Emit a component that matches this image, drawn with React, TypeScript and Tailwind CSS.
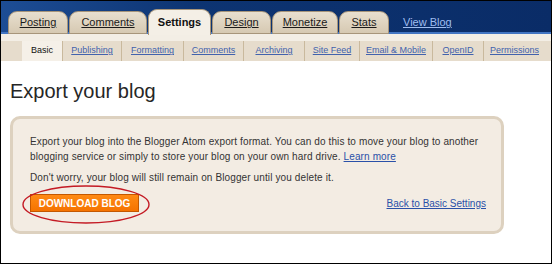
import React from 'react';

const tabs = [
  { label: 'Posting', w: 'w-[60px]' },
  { label: 'Comments', w: 'w-[78px]' },
  { label: 'Settings', w: 'w-[63px]', active: true },
  { label: 'Design', w: 'w-[59px]' },
  { label: 'Monetize', w: 'w-[66px]' },
  { label: 'Stats', w: 'w-[50px]' },
];

const subTabs = [
  { label: 'Basic', w: 'w-[40px]', active: true },
  { label: 'Publishing', w: 'w-[59px]' },
  { label: 'Formatting', w: 'w-[62px]' },
  { label: 'Comments', w: 'w-[60px]' },
  { label: 'Archiving', w: 'w-[61px]' },
  { label: 'Site Feed', w: 'w-[55px]' },
  { label: 'Email & Mobile', w: 'w-[73px]' },
  { label: 'OpenID', w: 'w-[51px]' },
  { label: 'Permissions', w: 'w-[62px]' },
];

function App() {
  return (
    <div className="relative w-[552px] h-[264px] overflow-hidden border border-black bg-white font-['Liberation_Sans',Arial,sans-serif] text-[#333]">
      {/* top navigation */}
      <div className="relative h-[33px] bg-[linear-gradient(to_right,#1d4d95,#0d3472_35%,#0a2c67)]">
        <div className="absolute left-0 right-0 bottom-0 h-[2px] bg-[#4275c2]" />
        <div className="relative flex items-end h-full pl-[7px] gap-[1px]">
          {tabs.map((t) =>
            t.active ? (
              <div
                key={t.label}
                className={`${t.w} h-[26px] -mb-px rounded-t-[9px] border border-b-0 border-[#a7957a] bg-[#f4efe6] flex items-center justify-center text-[11px] font-bold text-[#111]`}
              >
                {t.label}
              </div>
            ) : (
              <div
                key={t.label}
                className={`${t.w} h-[23px] rounded-t-[9px] border border-[#a7957a] bg-[linear-gradient(to_bottom,#e8dfcf,#d6c9b2)] flex items-center justify-center text-[11px] text-[#1a1a1a] underline`}
              >
                {t.label}
              </div>
            )
          )}
          <div className="ml-[13px] h-[23px] flex items-center text-[11px] text-[#9fbdf0] underline">View Blog</div>
        </div>
      </div>

      {/* sub navigation */}
      <div className="bg-[#f3eee5] pt-[7px]">
        <div className="flex h-[20px] bg-[#e6dccc]">
          <div className="w-[21px]" />
          {subTabs.map((s) =>
            s.active ? (
              <div key={s.label} className={`${s.w} bg-[#f5f0e8] flex items-center justify-center text-[9px] text-[#111]`}>
                {s.label}
              </div>
            ) : (
              <div
                key={s.label}
                className={`${s.w} border-l border-[#c9b99d] flex items-center justify-center text-[9px] text-[#4262ad] underline`}
              >
                {s.label}
              </div>
            )
          )}
        </div>
      </div>

      {/* content */}
      <div className="px-[9px]">
        <h1 className="mt-[18px] text-[20px] leading-[24px] font-medium text-[#262626]">Export your blog</h1>

        <div className="relative mt-[13px] w-[494px] h-[118px] rounded-[10px] border-[3px] border-[#ddd1bf] bg-[#f3ece3] pl-[17px] pr-[15px] pt-[15px]">
          <p className="text-[10px] leading-[15px] tracking-[0.12px] text-[#333]">
            Export your blog into the Blogger Atom export format. You can do this to move your blog to another
            <br />
            blogging service or simply to store your blog on your own hard drive.{' '}
            <span className="text-[#2a50a8] underline">Learn more</span>
          </p>
          <p className="mt-[6px] text-[10px] leading-[15px] tracking-[0.12px] text-[#333]">
            Don't worry, your blog will still remain on Blogger until you delete it.
          </p>

          <div className="mt-[9px] flex items-center justify-between">
            <div className="relative">
              <div className="w-[109px] h-[18px] border border-[#c45800] bg-[linear-gradient(to_bottom,#ff8a14,#f57300)] flex items-center justify-center text-[10px] font-bold text-white">
                DOWNLOAD BLOG
              </div>
              <svg
                className="absolute left-[-8px] top-[-9px]"
                width="128"
                height="39"
                viewBox="0 0 128 39"
              >
                <ellipse cx="64" cy="19.5" rx="63" ry="18.5" fill="none" stroke="#c41a24" strokeWidth="1.4" />
              </svg>
            </div>
            <span className="text-[10px] text-[#2a50a8] underline">Back to Basic Settings</span>
          </div>
        </div>
      </div>
    </div>
  );
}

export default App;
